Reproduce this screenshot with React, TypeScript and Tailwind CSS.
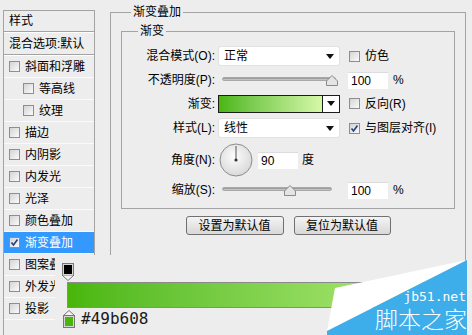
import React from "react";

const font = "font-['Liberation_Sans','Noto_Sans_CJK_SC',sans-serif]";

function Check({ checked = false }: { checked?: boolean }) {
  return (
    <span className="relative inline-block w-[11px] h-[11px] shrink-0 border border-[#8e8e8e] bg-gradient-to-br from-[#d4d4d4] to-[#fbfbfb]">
      {checked && (
        <svg viewBox="0 0 11 11" className="absolute -left-px -top-px w-[11px] h-[11px]">
          <path d="M2.5 5.5 L4.5 8 L8.5 2.5" stroke="#27407a" strokeWidth="1.6" fill="none" />
        </svg>
      )}
    </span>
  );
}

function Arrow() {
  return (
    <svg width="8" height="5" viewBox="0 0 8 5" className="shrink-0">
      <path d="M0 0 H8 L4 5 Z" fill="#111" />
    </svg>
  );
}

function Slider({ width, thumb }: { width: number; thumb: number }) {
  return (
    <div className="relative h-[12px]" style={{ width }}>
      <div className="absolute left-0 right-0 top-[3px] h-[4px] rounded-full bg-gradient-to-b from-[#8c8c8c] to-[#d6d6d6] border border-[#a8a8a8]" />
      <svg width="12" height="11" viewBox="0 0 12 11" className="absolute top-[1px]" style={{ left: thumb - 6 }}>
        <path d="M6 0.5 L11.5 6 V10.5 H0.5 V6 Z" fill="#e4e4e4" stroke="#8a8a8a" />
      </svg>
    </div>
  );
}

function Label({ children }: { children: React.ReactNode }) {
  return <div className="w-[93px] mr-[3px] text-right shrink-0">{children}</div>;
}

function NumBox({ value }: { value: string }) {
  return (
    <div className="w-[40px] h-[17px] bg-white pl-[3px] flex items-center text-[12px] border-t border-[#dcdcdc]">
      {value}
    </div>
  );
}

function Select({ value }: { value: string }) {
  return (
    <div className="w-[122px] h-[20px] bg-white rounded-[3px] border border-[#e2e2e2] flex items-center justify-between pl-[5px] pr-[5px]">
      <span>{value}</span>
      <Arrow />
    </div>
  );
}

const layers: { name: string; sub?: boolean; checked?: boolean; active?: boolean }[] = [
  { name: "斜面和浮雕" },
  { name: "等高线", sub: true },
  { name: "纹理", sub: true },
  { name: "描边" },
  { name: "内阴影" },
  { name: "内发光" },
  { name: "光泽" },
  { name: "颜色叠加" },
  { name: "渐变叠加", checked: true, active: true },
  { name: "图案叠加" },
  { name: "外发光" },
  { name: "投影" },
];

export default function App() {
  return (
    <div className={`relative w-[472px] h-[335px] overflow-hidden bg-[#ededed] text-[12px] leading-[16px] text-black flex items-start ${font}`}>
      {/* layer style list */}
      <div className="ml-[3px] mt-[10px] w-[92px] h-[330px] border-l border-r border-t border-[#a3a3a3] flex flex-col">
        <div className="h-[20px] pl-[5px] flex items-center">样式</div>
        <div className="h-px bg-[#a3a3a3]" />
        <div className="h-px bg-white" />
        <div className="h-[21px] pl-[5px] flex items-center">混合选项:默认</div>
        <div className="h-px bg-[#a3a3a3]" />
        <div className="h-px bg-white" />
        {layers.map((l) => (
          <div
            key={l.name}
            className={`h-[22px] flex items-center gap-[5px] border-b border-[#fafafa] ${l.sub ? "pl-[19px]" : "pl-[5px]"} ${l.active ? "bg-[#3399ff] text-white" : ""}`}
          >
            <Check checked={l.checked} />
            <span className="whitespace-nowrap">{l.name}</span>
          </div>
        ))}
      </div>

      {/* gradient overlay settings */}
      <fieldset className="ml-[15px] mt-[4px] w-[356px] h-[320px] border border-[#a3a3a3] px-[10px]">
        <legend className="ml-[10px] px-[2px]">渐变叠加</legend>
        <fieldset className="mt-[3px] border border-[#a3a3a3] pb-[7px]">
          <legend className="ml-[16px] px-[2px]">渐变</legend>
          <div className="pt-[5px] flex flex-col">
            <div className="h-[24px] flex items-center">
              <Label>混合模式(O):</Label>
              <Select value="正常" />
              <div className="ml-[9px] flex items-center gap-[5px]">
                <Check />
                <span>仿色</span>
              </div>
            </div>
            <div className="h-[24px] flex items-center">
              <Label>不透明度(P):</Label>
              <div className="w-[122px] pl-[4px]">
                <Slider width={114} thumb={110} />
              </div>
              <div className="ml-[8px]">
                <NumBox value="100" />
              </div>
              <span className="ml-[5px]">%</span>
            </div>
            <div className="h-[23px] flex items-center">
              <Label>渐变:</Label>
              <div className="w-[122px] h-[18px] border border-[#1c1c1c] flex">
                <div className="flex-1 bg-gradient-to-r from-[#49b608] to-[#d6f8a8] border-r border-[#1c1c1c]" />
                <div className="w-[16px] bg-white flex items-center justify-center">
                  <Arrow />
                </div>
              </div>
              <div className="ml-[9px] flex items-center gap-[5px]">
                <Check />
                <span>反向(R)</span>
              </div>
            </div>
            <div className="h-[26px] flex items-center">
              <Label>样式(L):</Label>
              <Select value="线性" />
              <div className="ml-[9px] flex items-center gap-[5px]">
                <Check checked />
                <span>与图层对齐(I)</span>
              </div>
            </div>
            <div className="h-[38px] flex items-center">
              <Label>角度(N):</Label>
              <svg width="34" height="34" viewBox="0 0 34 34" className="ml-px shrink-0">
                <defs>
                  <radialGradient id="dial" cx="45%" cy="40%" r="60%">
                    <stop offset="0" stopColor="#fdfdfd" />
                    <stop offset="1" stopColor="#d9d9d9" />
                  </radialGradient>
                </defs>
                <circle cx="17" cy="17" r="16" fill="url(#dial)" stroke="#8c8c8c" />
                <line x1="17" y1="17" x2="17" y2="3" stroke="#555" strokeWidth="1" />
                <circle cx="17" cy="17" r="1.6" fill="#333" />
              </svg>
              <div className="ml-[5px]">
                <NumBox value="90" />
              </div>
              <span className="ml-[4px]">度</span>
            </div>
            <div className="h-[22px] flex items-center">
              <Label>缩放(S):</Label>
              <div className="w-[122px] pl-[4px]">
                <Slider width={110} thumb={68} />
              </div>
              <div className="ml-[8px]">
                <NumBox value="100" />
              </div>
              <span className="ml-[5px]">%</span>
            </div>
          </div>
        </fieldset>
        <div className="mt-[7px] flex justify-center gap-[10px]">
          <button className="w-[98px] h-[19px] rounded-[3px] border border-[#707070] bg-gradient-to-b from-[#f4f4f4] to-[#d8d8d8] text-[12px] leading-[16px]">
            设置为默认值
          </button>
          <button className="w-[97px] h-[19px] rounded-[3px] border border-[#707070] bg-gradient-to-b from-[#f4f4f4] to-[#d8d8d8] text-[12px] leading-[16px]">
            复位为默认值
          </button>
        </div>
      </fieldset>

      {/* gradient editor strip pasted over the dialog */}
      <div className="absolute left-[55px] top-[255px] w-[408px] h-[80px] bg-[#ededed]">
        <svg width="12" height="18" viewBox="0 0 12 18" className="absolute left-[7px] top-[8px]">
          <rect x="0.5" y="0.5" width="11" height="12" fill="#d6d6d6" stroke="#777" />
          <rect x="2" y="2" width="8" height="9" fill="#000" />
          <path d="M0.5 12.5 L6 17.5 L11.5 12.5" fill="#f4f4f4" stroke="#777" />
        </svg>
        <div className="ml-[12px] mt-[27px] h-[26px] border border-[#8a8a8a] bg-gradient-to-r from-[#49b608] to-[#b8f07e]" />
        <div className="mt-[2px] ml-[8px] flex items-center gap-[6px]">
          <svg width="12" height="18" viewBox="0 0 12 18">
            <path d="M0.5 5.5 L6 0.5 L11.5 5.5" fill="#f4f4f4" stroke="#777" />
            <rect x="0.5" y="5.5" width="11" height="12" fill="#d6d6d6" stroke="#777" />
            <rect x="2" y="7" width="8" height="9" fill="#49b608" />
          </svg>
          <span className="font-['DejaVu_Sans_Mono',monospace] text-[16px] leading-[18px] text-[#1a1a1a]">#49b608</span>
        </div>
      </div>

      {/* watermark */}
      <div className="absolute left-[326px] top-[259px] w-[142px] h-[76px]">
        <svg width="142" height="76" viewBox="0 0 142 76" className="absolute inset-0">
          <polygon points="9,29 141,1 1,72" fill="#ffffff" />
          <polygon points="141,1 1,72 1,76 141,76" fill="#3daee9" />
        </svg>
        <div className="absolute right-[2px] top-[31px] font-['DejaVu_Sans_Mono',monospace] text-[13px] leading-[13px] text-white">jb51.net</div>
        <div className="absolute right-[1px] top-[48px] font-['Noto_Sans_CJK_SC',sans-serif] font-light text-[23px] leading-[22px] text-white">脚本之家</div>
      </div>
    </div>
  );
}
